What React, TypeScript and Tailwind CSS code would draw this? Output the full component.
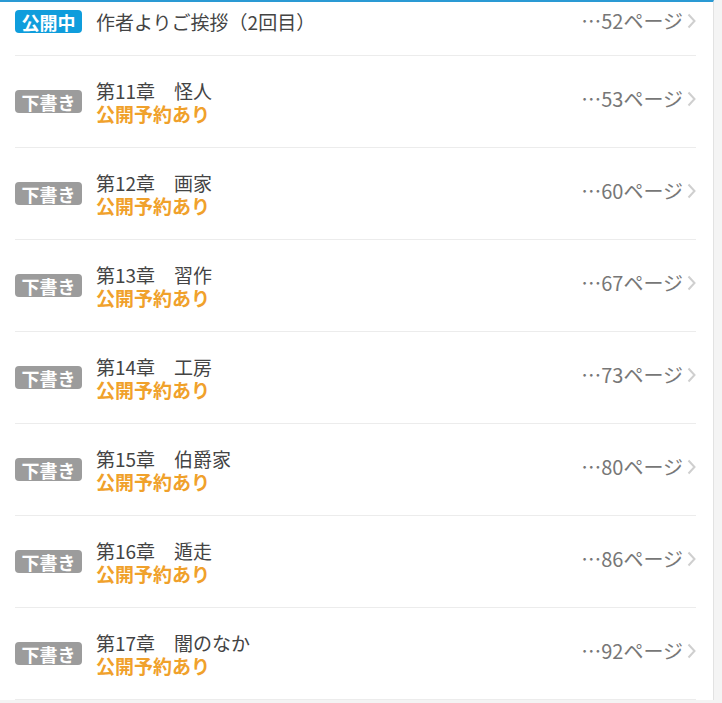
import React from "react";

type Row = { status: "pub" | "draft"; title: string; page: number; reserved?: boolean };

const rows: Row[] = [
  { status: "pub", title: "作者よりご挨拶（2回目）", page: 52 },
  { status: "draft", title: "第11章　怪人", page: 53, reserved: true },
  { status: "draft", title: "第12章　画家", page: 60, reserved: true },
  { status: "draft", title: "第13章　習作", page: 67, reserved: true },
  { status: "draft", title: "第14章　工房", page: 73, reserved: true },
  { status: "draft", title: "第15章　伯爵家", page: 80, reserved: true },
  { status: "draft", title: "第16章　遁走", page: 86, reserved: true },
  { status: "draft", title: "第17章　闇のなか", page: 92, reserved: true },
];

function Chevron() {
  return (
    <svg width="9" height="16" viewBox="0 0 9 16" className="ml-[4px] shrink-0">
      <path d="M1.5 1.5 L7.5 8 L1.5 14.5" fill="none" stroke="#cfcfcf" strokeWidth="2" />
    </svg>
  );
}

function Badge({ status }: { status: Row["status"] }) {
  const pub = status === "pub";
  return (
    <span
      className={
        "inline-flex h-[23px] w-[67px] shrink-0 items-center justify-center rounded-[4px] text-[18px] font-bold leading-none text-white " +
        (pub ? "bg-[#0f9ddc]" : "bg-[#9c9c9c]")
      }
    >
      {pub ? "公開中" : "下書き"}
    </span>
  );
}

export default function App() {
  return (
    <div
      className="h-[703px] w-[722px] overflow-hidden bg-[#f4f4f4]"
      style={{ fontFamily: '"Noto Sans CJK JP", "Noto Sans", sans-serif' }}
    >
      <div className="h-[700px] w-[714px] border-t-2 border-r border-t-[#2a9ad4] border-r-[#e2e2e2] bg-white">
        <div className="ml-[15px] mr-[17px]">
          {rows.map((r, i) => (
            <div
              key={i}
              className={
                "flex items-center border-b border-[#ececec] " +
                (i === 0 ? "h-[54px] pb-[14px]" : "h-[92px]")
              }
            >
              <Badge status={r.status} />
              <div className="ml-[14px] flex min-w-0 flex-1 flex-col">
                <span className="text-[19px] leading-[23px] text-[#444444]">{r.title}</span>
                {r.reserved && (
                  <span className="text-[19px] font-bold leading-[23px] text-[#f0a12b]">公開予約あり</span>
                )}
              </div>
              <div className={"flex items-center " + (i === 0 ? "mb-[2px]" : "mb-[5px]")}>
                <span className="text-[20px] leading-[24px] text-[#777777]">…{r.page}ページ</span>
                <Chevron />
              </div>
            </div>
          ))}
        </div>
      </div>
    </div>
  );
}
